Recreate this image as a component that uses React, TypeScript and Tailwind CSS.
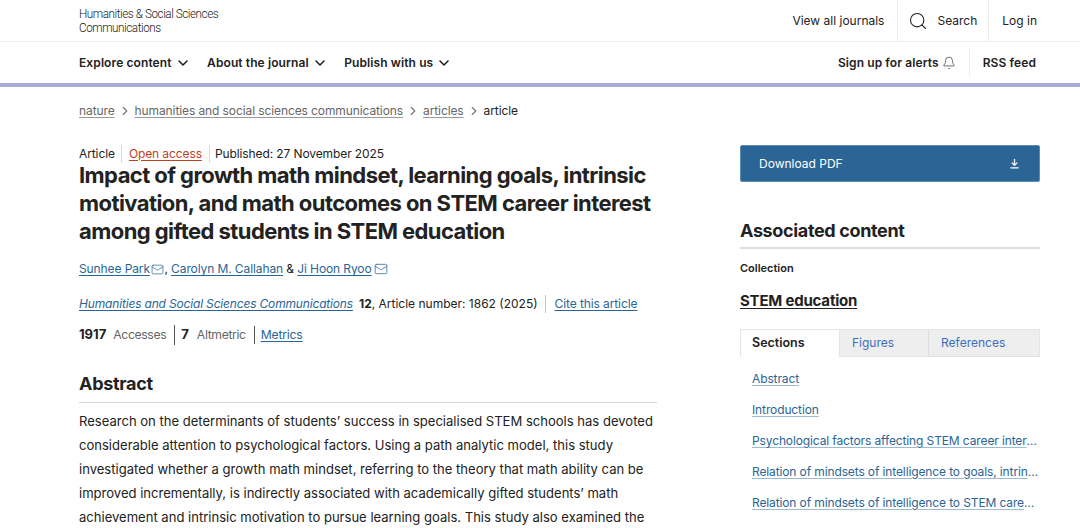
import { Bell, ChevronDown, ChevronRight, Mail, Search } from "lucide-react";

const sections = [
  "Abstract",
  "Introduction",
  "Psychological factors affecting STEM career interest",
  "Relation of mindsets of intelligence to goals, intrinsic motivation",
  "Relation of mindsets of intelligence to STEM career interest",
  "Current study",
];

const abstractLines = [
  "Research on the determinants of students’ success in specialised STEM schools has devoted",
  "considerable attention to psychological factors. Using a path analytic model, this study",
  "investigated whether a growth math mindset, referring to the theory that math ability can be",
  "improved incrementally, is indirectly associated with academically gifted students’ math",
  "achievement and intrinsic motivation to pursue learning goals. This study also examined the",
];

function NavItem({ label }: { label: string }) {
  return (
    <button type="button" className="flex items-center gap-[3px] font-semibold">
      {label}
      <ChevronDown className="h-4 w-4" strokeWidth={2.4} />
    </button>
  );
}

function Crumb({ label }: { label: string }) {
  return (
    <>
      <a className="underline decoration-[#9a9a9a] underline-offset-2">{label}</a>
      <ChevronRight className="mx-[3px] h-[14px] w-[14px] text-[#777]" strokeWidth={2} />
    </>
  );
}

export default function App() {
  return (
    <div className="h-[528px] w-[1080px] overflow-hidden bg-white font-['Inter','Liberation_Sans',sans-serif] text-[12px] text-[#222]">
      <header className="flex h-[42px] items-stretch justify-between border-b border-[#eeeeee] pl-[79px] pr-[43px]">
        <div className="origin-left scale-x-[0.865] pt-[6px] font-['Roboto',sans-serif] text-[13.5px] font-light leading-[14px] tracking-[-0.5px] text-[#222]">
          <div>Humanities &amp; Social Sciences</div>
          <div>Communications</div>
        </div>
        <div className="flex items-stretch">
          <a className="flex items-center pr-[13px]">View all journals</a>
          <a className="flex items-center gap-[9px] border-x border-[#eeeeee] pl-[10px] pr-[11px]">
            <Search className="h-5 w-5" strokeWidth={1.3} />
            Search
          </a>
          <a className="flex items-center pl-[13px]">Log in</a>
        </div>
      </header>

      <nav className="flex h-[41px] items-center justify-between pl-[79px] pr-[44px] tracking-[0.1px]">
        <div className="flex items-center gap-[16.5px]">
          <NavItem label="Explore content" />
          <NavItem label="About the journal" />
          <NavItem label="Publish with us" />
        </div>
        <div className="flex h-[29px] items-center font-semibold">
          <a className="flex items-center gap-[3px] pr-[13px]">
            Sign up for alerts
            <Bell className="h-[14px] w-[14px] text-[#444]" strokeWidth={1.3} />
          </a>
          <a className="flex h-full items-center border-l border-[#eeeeee] pl-[13px]">RSS feed</a>
        </div>
      </nav>
      <div className="h-1 bg-[#a6add8]" />

      <main className="flex items-start justify-between pl-[79px] pr-[40px]">
        <article className="w-[578px] pt-[16px]">
          <div className="flex items-center leading-[16px] tracking-[-0.1px] text-[#666]">
            <Crumb label="nature" />
            <Crumb label="humanities and social sciences communications" />
            <Crumb label="articles" />
            <span className="text-[#222]">article</span>
          </div>

          <div className="mt-[27px] flex h-[15px] items-center tracking-[-0.1px]">
            <span className="border-r border-[#cfdde6] pr-[6px]">Article</span>
            <a className="border-r border-[#cfdde6] px-[7px] text-[#c0411f] underline underline-offset-2">Open access</a>
            <span className="pl-[5px]">Published: 27 November 2025</span>
          </div>

          <h1 className="whitespace-nowrap text-[22px] font-bold leading-[28px] tracking-[-0.57px] text-[#222]">
            Impact of growth math mindset, learning goals, intrinsic
            <br />
            motivation, and math outcomes on STEM career interest
            <br />
            among gifted students in STEM education
          </h1>

          <div className="mt-[15px] flex h-[18px] items-center tracking-[-0.1px]">
            <a className="text-[#2a6595] underline underline-offset-2">Sunhee Park</a>
            <Mail className="ml-[1.5px] h-[13px] w-[13px] text-[#2a6595]" strokeWidth={1.3} />
            <span>,&nbsp;</span>
            <a className="text-[#2a6595] underline underline-offset-2">Carolyn M. Callahan</a>
            <span>&nbsp;&amp;&nbsp;</span>
            <a className="text-[#2a6595] underline underline-offset-2">Ji Hoon Ryoo</a>
            <Mail className="ml-[2px] h-[14px] w-[14px] text-[#2a6595]" strokeWidth={1.3} />
          </div>

          <div className="mt-[17px] flex h-[18px] items-center whitespace-nowrap">
            <a className="italic tracking-[-0.17px] text-[#2a6595] underline underline-offset-2">Humanities and Social Sciences Communications</a>
            <span className="ml-[6px] font-bold">12</span>
            <span>, Article number: 1862 (2025)</span>
            <a className="ml-[7px] border-l border-[#c5c5c5] pl-[9px] tracking-[-0.1px] text-[#2a6595] underline underline-offset-2">Cite this article</a>
          </div>

          <div className="mt-[13px] flex h-[18px] items-center text-[12.2px]">
            <span className="text-[13px] font-bold">1917</span>
            <span className="ml-[7px] tracking-[-0.35px] text-[#666]">Accesses</span>
            <span className="ml-[8px] border-l border-[#555] pl-[6px] text-[13px] font-bold">7</span>
            <span className="ml-[8px] tracking-[-0.35px] text-[#666]">Altmetric</span>
            <a className="ml-[8px] border-l border-[#555] pl-[6px] tracking-[-0.2px] text-[#2a6595] underline underline-offset-2">Metrics</a>
          </div>

          <h2 className="mt-[28px] border-b border-[#d5d5d5] pb-[6px] text-[18px] font-bold leading-[24px] tracking-[-0.3px] text-[#222]">
            Abstract
          </h2>
          <div className="mt-[6px] text-[13.05px] leading-[24px] text-[#222]">
            {abstractLines.map((line) => (
              <div key={line} className="whitespace-nowrap">{line}</div>
            ))}
          </div>
        </article>

        <aside className="w-[300px] pt-[58px]">
          <a className="flex h-[37px] items-center justify-between rounded-[2px] border border-[#5d8cb3] bg-[#2a6595] pl-[18px] pr-[19px] text-white">
            Download PDF
            <svg viewBox="0 0 12 12" className="h-[11px] w-[11px]" fill="none" stroke="currentColor" strokeWidth="1.4">
              <path d="M6 1v6.5M3 5l3 3 3-3M1.5 10.8h9" />
            </svg>
          </a>

          <h2 className="mt-[37px] border-b-2 border-[#dddddd] pb-[4px] text-[18px] font-bold leading-[24px] tracking-[-0.35px] text-[#222]">
            Associated content
          </h2>
          <div className="mt-[12px] text-[11px] font-semibold leading-[14px]">Collection</div>
          <a className="mt-[16px] block text-[15px] font-bold leading-[20px] tracking-[-0.2px] underline underline-offset-2">
            STEM education
          </a>

          <div className="mt-[18px] flex h-[28px] border-r border-t border-[#e5e5e5]">
            <div className="flex w-[99px] items-center border-l border-[#e5e5e5] bg-white pl-[11px] text-[12.5px] font-semibold">Sections</div>
            <div className="flex w-[89px] items-center border-b border-l border-[#e5e5e5] bg-[#eeeeee] pl-[12px] text-[#3a6fc0]">Figures</div>
            <div className="flex flex-1 items-center border-b border-l border-[#dddddd] bg-[#eeeeee] pl-[12px] text-[#3a6fc0]">References</div>
          </div>

          <ul className="mt-[13px] flex flex-col gap-[13px] pl-[12px] leading-[18px] tracking-[-0.12px]">
            {sections.map((item) => (
              <li key={item} className="truncate text-[#2a6595]">
                <a className="underline decoration-[#9dbbd3] underline-offset-2">{item}</a>
              </li>
            ))}
          </ul>
        </aside>
      </main>
    </div>
  );
}
